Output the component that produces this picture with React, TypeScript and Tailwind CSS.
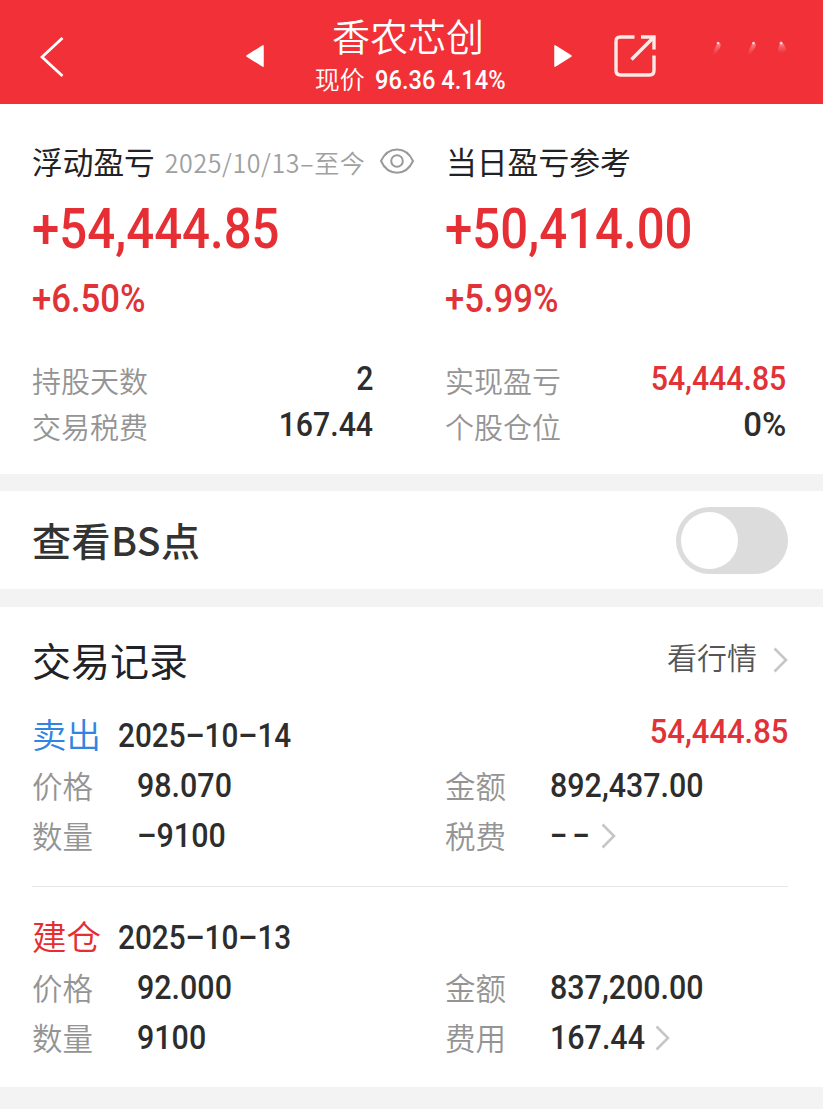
import { useState } from "react";
import clsx from "clsx";

interface TradeRecord {
  id: number;
  type: "sell" | "open";
  label: string;
  date: string;
  profit?: string;
  price: string;
  amount: string;
  quantity: string;
  feeLabel: string;
  fee: string;
}

const records: TradeRecord[] = [
  {
    id: 1,
    type: "sell",
    label: "卖出",
    date: "2025-10-14",
    profit: "54,444.85",
    price: "98.070",
    amount: "892,437.00",
    quantity: "-9100",
    feeLabel: "税费",
    fee: "--",
  },
  {
    id: 2,
    type: "open",
    label: "建仓",
    date: "2025-10-13",
    price: "92.000",
    amount: "837,200.00",
    quantity: "9100",
    feeLabel: "费用",
    fee: "167.44",
  },
];

// Condensed numerals, squeezed towards the side they are aligned to
const Num = ({
  value,
  className,
  right,
}: {
  value: string;
  className?: string;
  right?: boolean;
}) => (
  <span
    className={clsx(
      "font-['Roboto','Noto_Sans_CJK_SC',sans-serif] font-medium whitespace-nowrap",
      right ? "origin-right" : "origin-left",
      className
    )}
  >
    {value.replace(/-/g, "–")}
  </span>
);

const Chevron = () => (
  <svg className="w-[15px] h-[26px]" viewBox="0 0 15 26" fill="none">
    <path d="M1.5 1.5L13 13L1.5 24.5" stroke="#c6c6c6" strokeWidth="2.6" />
  </svg>
);

const Header = () => (
  <header className="h-[104px] bg-[#f23038] text-white flex items-center">
    <svg className="w-6 h-10 ml-10 mt-[9px]" viewBox="0 0 24 40" fill="none">
      <path d="M22.5 1L2 20L22.5 39" stroke="#fff" strokeWidth="2.8" />
    </svg>
    <svg className="w-5 h-6 ml-[181px] mt-2" viewBox="0 0 20 24">
      <path
        d="M2 12L18 1.8V22.2Z"
        fill="#fff"
        stroke="#fff"
        strokeWidth="1.5"
        strokeLinejoin="round"
      />
    </svg>
    <div className="w-[286px] h-full flex flex-col items-center pt-2">
      <h1 className="text-[38px] leading-[54px] font-[350]">香农芯创</h1>
      <div className="flex items-center -mt-1 h-11 pl-1">
        <span className="text-[25px] font-[350] pb-[3px]">现价</span>
        <Num
          value="96.36 4.14%"
          className="text-[26px] ml-2.5 -mr-[13px] scale-x-[0.91]"
        />
      </div>
    </div>
    <svg className="w-5 h-6 ml-[2px] mt-2" viewBox="0 0 20 24">
      <path
        d="M18 12L2 1.8V22.2Z"
        fill="#fff"
        stroke="#fff"
        strokeWidth="1.5"
        strokeLinejoin="round"
      />
    </svg>
    <svg
      className="w-[42px] h-[42px] ml-[41px] mt-2"
      viewBox="0 0 42 42"
      fill="none"
      stroke="#ffe9e6"
      strokeWidth="3.4"
    >
      <path d="M20.5 2H6.5Q2 2 2 6.5V35.5Q2 40 6.5 40H35.5Q40 40 40 35.5V20.5" />
      <path d="M27 2H40V14.5M39.5 2.5L17.5 24.5" />
    </svg>
    <svg className="w-[90px] h-8 ml-11" viewBox="0 0 90 32">
      <defs>
        <linearGradient id="dot" x1="0" y1="0" x2="0" y2="1">
          <stop offset="0" stopColor="#fff" stopOpacity="0.5" />
          <stop offset="0.5" stopColor="#fff" stopOpacity="0.2" />
          <stop offset="1" stopColor="#fff" stopOpacity="0" />
        </linearGradient>
      </defs>
      <g fill="url(#dot)">
        <path d="M18 6Q22 7 20 12L15 19Q12 20 14 14Z" />
        <path d="M53 6Q57 7 55 12L50 19Q47 20 49 14Z" />
        <path d="M81 6Q84 7 86 13Q86 17 81 17Q75 17 81 6Z" />
      </g>
      <g fill="#fff" fillOpacity="0.7">
        <circle cx="18" cy="7" r="1.3" />
        <circle cx="53.5" cy="7" r="1.3" />
        <circle cx="81" cy="7" r="1.5" />
      </g>
    </svg>
  </header>
);

const StatRow = ({
  label,
  value,
  red,
}: {
  label: string;
  value: string;
  red?: boolean;
}) => (
  <div className="flex items-center justify-between h-[46px]">
    <span className="text-[29px] leading-[46px] font-[350] text-[#949494]">
      {label}
    </span>
    <Num
      right
      value={value}
      className={clsx(
        "text-[34px] leading-[38px] pb-1",
        value.endsWith("%") ? "scale-x-[0.97]" : "scale-x-[0.89]",
        red ? "text-[#e03237]" : "text-[#2d2d2d]"
      )}
    />
  </div>
);

const Field = ({
  label,
  value,
  arrow,
}: {
  label: string;
  value: string;
  arrow?: boolean;
}) => (
  <div className="flex items-center h-[50px]">
    <span className="w-[105px] text-[30.5px] leading-[46px] pb-[3px] font-[350] text-[#949494]">
      {label}
    </span>
    <Num
      value={value}
      className={clsx(
        "text-[34px] leading-[48px] pb-[2px] text-[#2d2d2d]",
        value === "--" ? "scale-x-[0.78] tracking-[7px]" : "scale-x-[0.895]"
      )}
    />
    {arrow && (
      <span className={value === "--" ? "-ml-[7px]" : "-ml-px"}>
        <Chevron />
      </span>
    )}
  </div>
);

const Record = ({ record }: { record: TradeRecord }) => (
  <div className="pb-[25px]">
    <div className="flex items-center h-[50px]">
      <span
        className={clsx(
          "text-[34.5px] leading-[46px] pb-1 font-[350]",
          record.type === "sell" ? "text-[#3185e0]" : "text-[#e52d32]"
        )}
      >
        {record.label}
      </span>
      <Num
        value={record.date}
        className="text-[33px] ml-[17px] pt-[2px] text-[#2d2d2d] scale-x-90"
      />
      {record.profit && (
        <Num
          right
          value={record.profit}
          className="text-[34px] leading-[42px] pb-2 ml-auto text-[#e03237] scale-x-[0.91]"
        />
      )}
    </div>
    <div className="grid grid-cols-[413px_1fr] pt-px">
      <Field label="价格" value={record.price} />
      <Field label="金额" value={record.amount} />
      <Field label="数量" value={record.quantity} />
      <Field label={record.feeLabel} value={record.fee} arrow />
    </div>
  </div>
);

const Profit = ({ value, percent }: { value: string; percent: string }) => (
  <>
    <Num
      value={value}
      className="block text-[56px] leading-[84px] pt-px text-[#e62f34] scale-x-[0.878]"
    />
    <Num
      value={percent}
      className="block text-[38.5px] leading-[56px] text-[#e03237] scale-x-90"
    />
  </>
);

const App = () => {
  const [showBs, setShowBs] = useState(false);

  return (
    <div className="w-[823px] h-[1109px] overflow-hidden bg-[#f3f3f3] font-['Noto_Sans_CJK_SC',sans-serif]">
      <Header />

      {/* Profit summary */}
      <section className="h-[370px] bg-white px-8 pt-8 grid grid-cols-[413px_1fr] content-start">
        <div className="w-[382px]">
          <div className="flex items-center h-[50px]">
            <h2 className="text-[30.7px] text-[#1f2226]">浮动盈亏</h2>
            <span className="text-[25px] font-[350] tracking-[0.6px] text-[#9f9f9f] ml-2.5 pt-1 whitespace-nowrap">
              2025/10/13–至今
            </span>
            <svg
              className="w-[34px] h-[26px] ml-auto shrink-0"
              viewBox="0 0 34 26"
              fill="none"
              stroke="#9a9a9a"
              strokeWidth="2"
            >
              <path d="M1 13C8 -2.5 26 -2.5 33 13C26 28.5 8 28.5 1 13Z" />
              <circle cx="17" cy="13" r="5.8" />
            </svg>
          </div>
          <Profit value="+54,444.85" percent="+6.50%" />
        </div>
        <div>
          <div className="flex items-center h-[50px] pl-px">
            <h2 className="text-[30.8px] text-[#1f2226]">当日盈亏参考</h2>
          </div>
          <Profit value="+50,414.00" percent="+5.99%" />
        </div>
        <div className="w-[341px] pt-[30px]">
          <StatRow label="持股天数" value="2" />
          <StatRow label="交易税费" value="167.44" />
        </div>
        <div className="w-[341px] pt-[30px]">
          <StatRow label="实现盈亏" value="54,444.85" red />
          <StatRow label="个股仓位" value="0%" />
        </div>
      </section>

      {/* BS point switch */}
      <section className="mt-[17px] h-[98px] bg-white pl-8 pr-[35px] flex items-center justify-between">
        <h2 className="text-[39px] tracking-[0.5px] font-medium text-[#333] pb-[2px]">
          查看BS点
        </h2>
        <button
          type="button"
          role="switch"
          aria-checked={showBs}
          onClick={() => setShowBs(!showBs)}
          className={clsx(
            "w-28 h-[67px] rounded-full flex items-center px-[5px]",
            showBs ? "bg-[#f23038] justify-end" : "bg-[#dcdcdc]"
          )}
        >
          <span className="size-[57px] rounded-full bg-white" />
        </button>
      </section>

      {/* Trade records */}
      <section className="mt-[18px] h-[480px] bg-white pl-8 pr-[35px] pt-[23px]">
        <div className="flex items-center justify-between h-[60px] mb-5">
          <h2 className="text-[39px] leading-[54px] pb-[3px] text-[#1f2226]">
            交易记录
          </h2>
          <div className="flex items-center">
            <span className="text-[30px] font-[350] text-[#555] pb-2 mr-4">
              看行情
            </span>
            <Chevron />
          </div>
        </div>
        <Record record={records[0]} />
        <div className="h-px bg-[#e8e8e8] mb-[25px]" />
        <Record record={records[1]} />
      </section>
    </div>
  );
};

export default App;
